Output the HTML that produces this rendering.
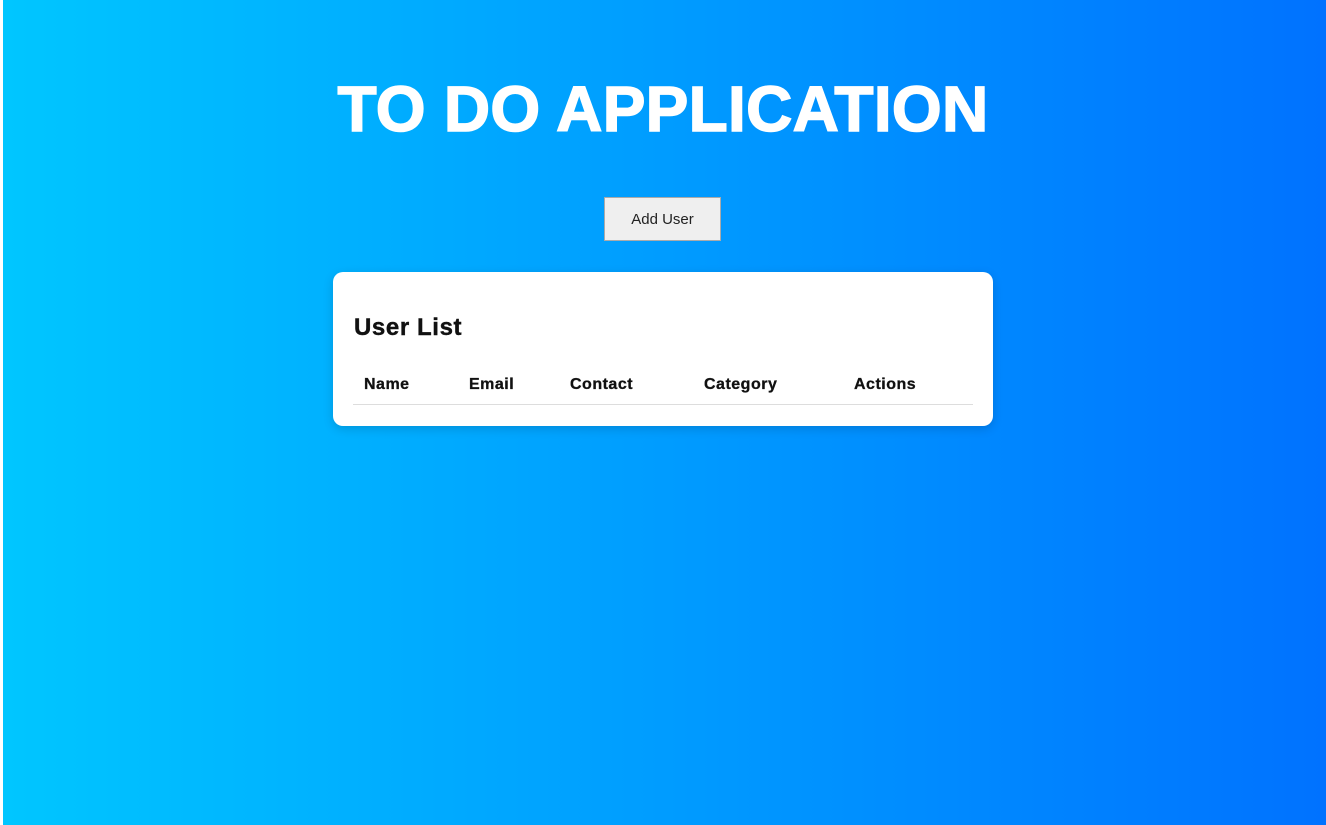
<!DOCTYPE html>
<html><head><style>
html,body{margin:0;padding:0;width:1326px;height:825px;overflow:hidden;background:#fff;font-family:"Liberation Sans",sans-serif}
.bg{position:absolute;left:3px;top:0;width:1323px;height:825px;background:linear-gradient(to right,#00c6ff,#0072ff)}
h1{position:absolute;left:0;width:1326px;top:74px;margin:0;text-align:center;color:#fff;font-size:64px;font-weight:bold;line-height:70px;-webkit-text-stroke:1.5px #fff;letter-spacing:0.3px}
.btn{position:absolute;left:604px;top:197px;width:115px;height:42px;background:#efefef;border:1px solid #aaa;font-size:15px;color:#222;text-align:center;line-height:44px}
.card{position:absolute;left:333px;top:272px;width:660px;height:154px;background:#fff;border-radius:10px;box-shadow:0 3px 10px rgba(0,0,0,.15)}
.card h2{position:absolute;left:21px;top:42px;margin:0;font-size:24px;font-weight:bold;color:#111;letter-spacing:0.6px;-webkit-text-stroke:0.4px #111}
.th{position:absolute;top:104px;font-size:16px;font-weight:bold;color:#111;letter-spacing:0.5px;-webkit-text-stroke:0.3px #111}
.line{position:absolute;left:20px;top:132px;width:620px;height:1px;background:#ddd}
</style></head><body>
<div class="bg"></div>
<h1>TO DO APPLICATION</h1>
<div class="btn">Add User</div>
<div class="card">
<h2>User List</h2>
<div class="th" style="left:31px">Name</div>
<div class="th" style="left:136px">Email</div>
<div class="th" style="left:237px">Contact</div>
<div class="th" style="left:371px">Category</div>
<div class="th" style="left:521px">Actions</div>
<div class="line"></div>
</div>
</body></html>
